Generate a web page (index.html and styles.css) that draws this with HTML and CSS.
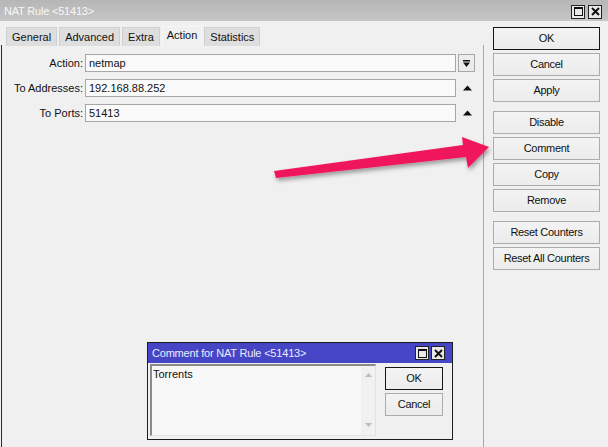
FILE: index.html
```html
<!DOCTYPE html>
<html>
<head>
<meta charset="utf-8">
<link rel="stylesheet" href="styles.css">
</head>
<body>
<div class="win">
  <div class="titlebar">
    <span class="title">NAT Rule &lt;51413&gt;</span>
    <div class="wbtns">
      <span class="wbtn"><svg width="11" height="11" viewBox="0 0 11 11"><rect x="1.5" y="1.5" width="8" height="8" fill="none" stroke="#111" stroke-width="1"/><rect x="1" y="1" width="9" height="2" fill="#111"/></svg></span>
      <span class="wbtn"><svg width="11" height="11" viewBox="0 0 11 11"><path d="M2 2 L9 9 M9 2 L2 9" stroke="#111" stroke-width="2"/></svg></span>
    </div>
  </div>
  <div class="main">
    <div class="left">
      <div class="tabs">
        <div class="tab">General</div>
        <div class="tab">Advanced</div>
        <div class="tab">Extra</div>
        <div class="tab active">Action</div>
        <div class="tab">Statistics</div>
      </div>
      <div class="panel">
        <div class="row">
          <span class="lbl">Action:</span>
          <div class="input">netmap</div>
          <div class="dd"><svg width="9" height="9" viewBox="0 0 9 9"><rect x="1" y="1" width="7" height="1.5" fill="#111"/><path d="M1 3.5 L8 3.5 L4.5 8 Z" fill="#111"/></svg></div>
        </div>
        <div class="row">
          <span class="lbl">To Addresses:</span>
          <div class="input">192.168.88.252</div>
          <div class="up"><svg width="9" height="6" viewBox="0 0 9 6"><path d="M0 5.5 L9 5.5 L4.5 0.5 Z" fill="#111"/></svg></div>
        </div>
        <div class="row">
          <span class="lbl">To Ports:</span>
          <div class="input">51413</div>
          <div class="up"><svg width="9" height="6" viewBox="0 0 9 6"><path d="M0 5.5 L9 5.5 L4.5 0.5 Z" fill="#111"/></svg></div>
        </div>
      </div>
    </div>
    <div class="side">
      <div class="btn default">OK</div>
      <div class="btn">Cancel</div>
      <div class="btn">Apply</div>
      <div class="btn sep">Disable</div>
      <div class="btn">Comment</div>
      <div class="btn">Copy</div>
      <div class="btn">Remove</div>
      <div class="btn sep">Reset Counters</div>
      <div class="btn">Reset All Counters</div>
    </div>
  </div>

  <div class="dialog">
    <div class="dtitle">
      <span class="dtext">Comment for NAT Rule &lt;51413&gt;</span>
      <div class="wbtns dwbtns">
        <span class="wbtn"><svg width="11" height="11" viewBox="0 0 11 11"><rect x="1.5" y="1.5" width="8" height="8" fill="none" stroke="#111" stroke-width="1"/><rect x="1" y="1" width="9" height="2" fill="#111"/></svg></span>
        <span class="wbtn"><svg width="11" height="11" viewBox="0 0 11 11"><path d="M2 2 L9 9 M9 2 L2 9" stroke="#111" stroke-width="2"/></svg></span>
      </div>
    </div>
    <div class="dbody">
      <div class="memo">
        <div class="memotext">Torrents</div>
        <div class="scroll">
          <svg width="7" height="4" viewBox="0 0 7 4"><path d="M0 4 L7 4 L3.5 0 Z" fill="#bdbdbd"/></svg>
          <svg width="7" height="4" viewBox="0 0 7 4"><path d="M0 0 L7 0 L3.5 4 Z" fill="#bdbdbd"/></svg>
        </div>
      </div>
      <div class="dbtns">
        <div class="btn dbtn default">OK</div>
        <div class="btn dbtn">Cancel</div>
      </div>
    </div>
  </div>

  <svg class="arrow" width="608" height="447" viewBox="0 0 608 447">
    <defs>
      <filter id="sh" x="-10%" y="-50%" width="120%" height="200%">
        <feDropShadow dx="1.5" dy="3" stdDeviation="2" flood-color="#000" flood-opacity="0.35"/>
      </filter>
    </defs>
    <polygon points="274,171 463,145 462,137 489,147 468,168 466,157 276,178" fill="#f0175c" filter="url(#sh)"/>
  </svg>
</div>
</body>
</html>
```

FILE: styles.css
```css
* { box-sizing: border-box; }
html, body { margin: 0; padding: 0; }
body {
  width: 608px;
  height: 447px;
  overflow: hidden;
  background: #f0f0f0;
  font-family: "Liberation Sans", Arial, sans-serif;
  font-size: 11px;
  color: #111;
}
.win {
  position: relative;
  width: 608px;
  height: 447px;
  display: flex;
  flex-direction: column;
}
.titlebar {
  height: 21px;
  background: linear-gradient(#b6b6b6, #c6c6c6);
  display: flex;
  align-items: center;
  justify-content: space-between;
  padding: 0 6px 0 4px;
}
.title {
  color: #f7f7f7;
  font-size: 11px;
  padding-top: 1px;
  letter-spacing: -0.2px;
}
.wbtns {
  display: flex;
  gap: 3px;
  padding-top: 2px;
}
.wbtn {
  width: 14px;
  height: 14px;
  border: 1px solid #222;
  background: #e9e9e9;
  display: flex;
  align-items: center;
  justify-content: center;
}
.main {
  flex: 1;
  display: flex;
}
.left {
  width: 484px;
  display: flex;
  flex-direction: column;
}
.tabs {
  display: flex;
  gap: 2px;
  padding: 5px 0 0 6px;
  height: 24px;
}
.tab {
  height: 19px;
  padding: 0 5px;
  line-height: 18px;
  background: #dedede;
  border: 1px solid #d0d0d0;
  border-bottom: none;
  margin-top: 1px;
}
.tab.active {
  background: #f0f0f0;
  border-color: #f7f7f7;
  margin-top: 0;
  line-height: 16px;
  height: 20px;
  padding: 0 4px;
}
.panel {
  flex: 1;
  margin-left: 1px;
  border-left: 1px solid #2c2c2c;
  border-right: 1px solid #a9a9a9;
  padding-top: 9px;
  display: flex;
  flex-direction: column;
  gap: 7px;
}
.row {
  display: flex;
  align-items: center;
  height: 18px;
}
.lbl {
  width: 81px;
  text-align: right;
  margin-right: 2px;
}
.input {
  width: 371px;
  height: 18px;
  border: 1px solid #a7a7a7;
  background: #fafafa;
  padding-left: 3px;
  line-height: 16px;
}
.dd {
  width: 17px;
  height: 18px;
  margin-left: 2px;
  border: 1px solid #a7a7a7;
  background: #ececec;
  display: flex;
  align-items: center;
  justify-content: center;
}
.up {
  width: 17px;
  margin-left: 2px;
  display: flex;
  justify-content: center;
  padding-left: 1px;
}
.side {
  width: 124px;
  padding: 6px 0 0 9px;
  display: flex;
  flex-direction: column;
  gap: 3px;
}
.btn {
  width: 107px;
  height: 23px;
  border: 1px solid #acacac;
  background: linear-gradient(#f3f3f3, #ececec);
  text-align: center;
  line-height: 21px;
  letter-spacing: -0.3px;
}
.btn.default {
  border-color: #151515;
}
.btn.sep {
  margin-top: 6px;
}
.dialog {
  position: absolute;
  left: 147px;
  top: 342px;
  width: 306px;
  height: 98px;
  border: 1px solid #1d1d1d;
  background: #f0f0f0;
  display: flex;
  flex-direction: column;
}
.dtitle {
  height: 20px;
  background: #4545c5;
  display: flex;
  align-items: center;
  justify-content: space-between;
  padding: 0 7px 0 4px;
}
.dtext {
  color: #ececff;
  font-size: 11px;
  letter-spacing: -0.2px;
}
.dwbtns {
  padding-top: 0;
  gap: 2px;
}
.dbody {
  flex: 1;
  display: flex;
  padding: 1px 0 0 2px;
}
.memo {
  width: 226px;
  height: 72px;
  border-top: 2px solid #8a8a8a;
  border-left: 2px solid #8a8a8a;
  border-right: 1px solid #e2e2e2;
  border-bottom: 1px solid #e2e2e2;
  background: #f8f8f8;
  display: flex;
}
.memotext {
  flex: 1;
  padding: 2px 0 0 1px;
}
.scroll {
  width: 14px;
  background: #f1f1f1;
  display: flex;
  flex-direction: column;
  justify-content: space-between;
  align-items: center;
  padding: 7px 0 8px;
}
.dbtns {
  margin-left: 9px;
  padding-top: 3px;
  display: flex;
  flex-direction: column;
  gap: 3px;
}
.dbtn {
  width: 58px;
}
.arrow {
  position: absolute;
  left: 0;
  top: 0;
  pointer-events: none;
}
```
